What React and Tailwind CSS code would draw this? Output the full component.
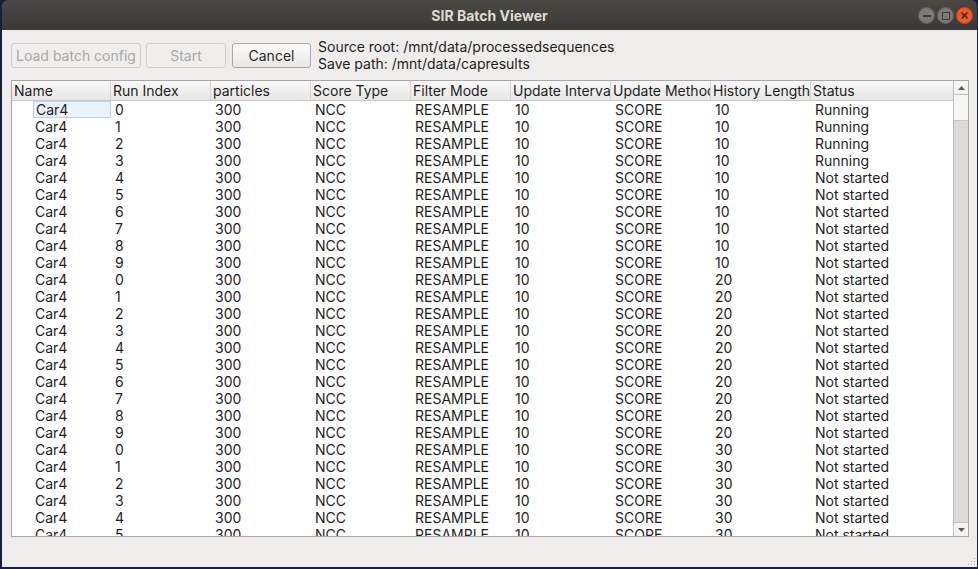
import React from "react";

const cols = [
  { t: "Name", w: "w-[99px]" },
  { t: "Run Index", w: "w-[100px]" },
  { t: "particles", w: "w-[100px]" },
  { t: "Score Type", w: "w-[100px]" },
  { t: "Filter Mode", w: "w-[100px]" },
  { t: "Update Interval", w: "w-[100px]" },
  { t: "Update Method", w: "w-[100px]" },
  { t: "History Length", w: "w-[100px]" },
  { t: "Status", w: "flex-1" },
];

const rows = Array.from({ length: 26 }, (_, i) => ({
  name: "Car4",
  run: String(i % 10),
  particles: "300",
  score: "NCC",
  filter: "RESAMPLE",
  interval: "10",
  method: "SCORE",
  hist: String(10 * (Math.floor(i / 10) + 1)),
  status: i < 4 ? "Running" : "Not started",
}));

function TitleButton({ children, close }) {
  return (
    <div
      className={
        "w-[17px] h-[17px] rounded-full flex items-center justify-center " +
        (close
          ? "bg-[#ef5a28] border border-[#c74318]"
          : "bg-[#7c7a74] border border-[#5f5d58]")
      }
    >
      {children}
    </div>
  );
}

function Btn({ children, w, disabled }) {
  return (
    <div
      className={
        "h-[25px] rounded-[3px] flex items-center justify-center border " +
        w +
        (disabled
          ? " border-[#cfcecc] text-[#a9a8a6] bg-[#efeeed]"
          : " border-[#a9a8a6] text-[#2b2b2b] bg-gradient-to-b from-[#fafafa] to-[#e9e8e6]")
      }
    >
      {children}
    </div>
  );
}

export default function App() {
  return (
    <div
      className="w-[978px] h-[569px] bg-[#14213d] pl-[2px] pr-[1px] pb-[2px] flex flex-col overflow-hidden text-[14px] text-[#1e1e1e]"
      style={{ fontFamily: 'Inter, "Open Sans", sans-serif' }}
    >
      {/* Title bar */}
      <div className="h-[30px] shrink-0 rounded-t-[6px] bg-gradient-to-b from-[#4a4945] to-[#3a3935] flex items-center relative">
        <div className="flex-1 text-center text-[14px] font-bold text-[#dfdbd2]">
          SIR Batch Viewer
        </div>
        <div className="absolute right-[4px] top-[7px] flex gap-[2px]">
          <TitleButton>
            <div className="w-[8px] h-[2px] bg-[#3c3b37]" />
          </TitleButton>
          <TitleButton>
            <div className="w-[8px] h-[8px] border-[1.5px] border-[#3c3b37]" />
          </TitleButton>
          <TitleButton close>
            <svg width="9" height="9" viewBox="0 0 9 9">
              <path d="M1.5 1.5 L7.5 7.5 M7.5 1.5 L1.5 7.5" stroke="#3c2a20" strokeWidth="1.6" />
            </svg>
          </TitleButton>
        </div>
      </div>

      {/* Content */}
      <div className="flex-1 bg-[#eeedeb] pt-[8px] pl-[9px] pr-[8px] flex flex-col relative">
        <div className="h-[34px] flex items-center">
          <Btn w="w-[130px]" disabled>Load batch config</Btn>
          <div className="w-[5px]" />
          <Btn w="w-[80px]" disabled>Start</Btn>
          <div className="w-[6px]" />
          <Btn w="w-[79px]">Cancel</Btn>
          <div className="ml-[7px] leading-[17px] text-[#1e1e1e]">
            <div>Source root: /mnt/data/processedsequences</div>
            <div>Save path: /mnt/data/capresults</div>
          </div>
        </div>

        {/* Table */}
        <div className="mt-[8px] w-[958px] h-[457px] border border-[#a8a7a5] bg-white flex">
          <div className="flex-1 flex flex-col overflow-hidden">
            <div className="h-[20px] shrink-0 flex bg-gradient-to-b from-[#f8f8f8] to-[#e7e6e5] border-b border-[#c8c7c5]">
              {cols.map((c, i) => (
                <div
                  key={i}
                  className={
                    c.w +
                    " shrink-0 pl-[2px] whitespace-nowrap overflow-hidden leading-[19px] text-[#1e1e1e] " +
                    (i < cols.length - 1 ? "border-r border-[#d4d3d1]" : "")
                  }
                >
                  {c.t}
                </div>
              ))}
            </div>
            <div className="flex-1 overflow-hidden">
              {rows.map((r, i) => (
                <div key={i} className="h-[17px] flex leading-[17px] whitespace-nowrap">
                  <div className="w-[99px] shrink-0 pl-[21px]">
                    <div
                      className={
                        "h-[17px] pl-[2px] " +
                        (i === 0 ? "bg-[#eaf3fb] border border-[#b8d4ee] leading-[15px]" : "")
                      }
                    >
                      {r.name}
                    </div>
                  </div>
                  <div className="w-[100px] shrink-0 pl-[4px]">{r.run}</div>
                  <div className="w-[100px] shrink-0 pl-[4px]">{r.particles}</div>
                  <div className="w-[100px] shrink-0 pl-[4px]">{r.score}</div>
                  <div className="w-[100px] shrink-0 pl-[4px]">{r.filter}</div>
                  <div className="w-[100px] shrink-0 pl-[4px]">{r.interval}</div>
                  <div className="w-[100px] shrink-0 pl-[4px]">{r.method}</div>
                  <div className="w-[100px] shrink-0 pl-[4px]">{r.hist}</div>
                  <div className="flex-1 pl-[4px]">{r.status}</div>
                </div>
              ))}
            </div>
          </div>
          {/* Scrollbar */}
          <div className="w-[15px] shrink-0 border-l border-[#c0bfbd] flex flex-col bg-[#dcdbd9]">
            <div className="h-[14px] bg-[#f4f4f3] border-b border-[#c0bfbd] flex items-center justify-center">
              <svg width="7" height="4" viewBox="0 0 7 4">
                <path d="M0 4 L3.5 0 L7 4 Z" fill="#5a5a5a" />
              </svg>
            </div>
            <div className="h-[26px] bg-[#f6f6f5] border-b border-[#c8c7c5]" />
            <div className="flex-1" />
            <div className="h-[14px] bg-[#f4f4f3] border-t border-[#c0bfbd] flex items-center justify-center">
              <svg width="7" height="4" viewBox="0 0 7 4">
                <path d="M0 0 L7 0 L3.5 4 Z" fill="#5a5a5a" />
              </svg>
            </div>
          </div>
        </div>

        {/* resize grip */}
        <div className="absolute right-[2px] bottom-[2px] grid grid-cols-3 gap-[2px]">
          {[0, 0, 1, 0, 1, 1, 1, 1, 1].map((v, i) => (
            <div key={i} className={"w-[1px] h-[1px] " + (v ? "bg-[#b0afad]" : "")} />
          ))}
        </div>
      </div>
    </div>
  );
}
